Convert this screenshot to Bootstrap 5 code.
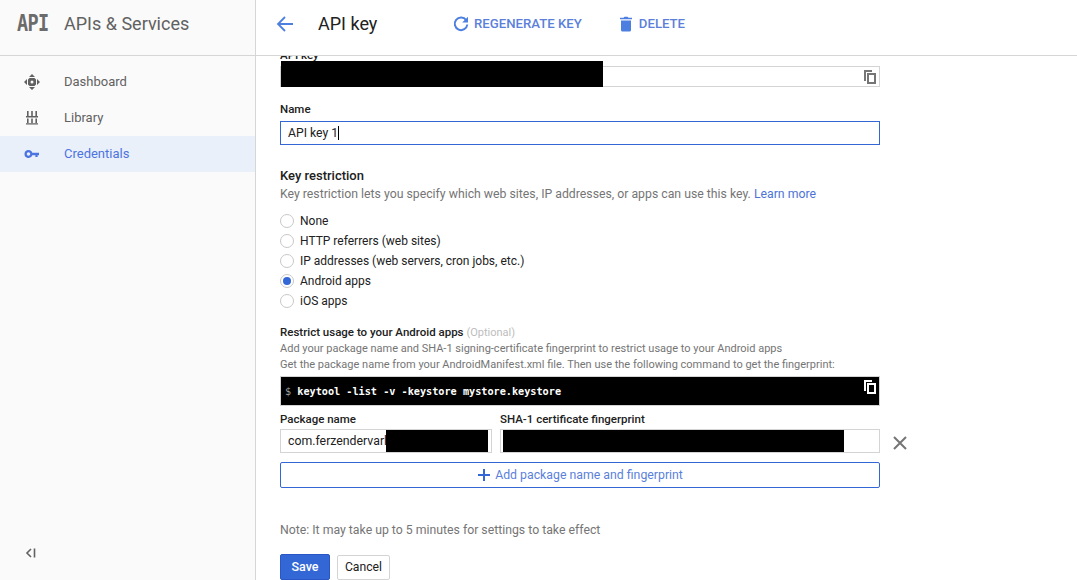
<!DOCTYPE html>
<html lang="en">
<head>
<meta charset="utf-8">
<title>API key</title>
<link href="https://cdn.jsdelivr.net/npm/bootstrap@5.3.0/dist/css/bootstrap.min.css" rel="stylesheet">
<style>
html,body{height:580px;overflow:hidden}
body{font-family:Roboto,"Liberation Sans",sans-serif;font-size:13px;color:#212121;background:#fff;line-height:20px}
.shell{height:580px}
.side{width:256px;flex:none;background:#fafafa;border-right:1px solid #d6d6d6}
.side-head{height:56px;border-bottom:1px solid #d6d6d6;padding:0 0 8px 17px;gap:16px}
.api-logo{font-family:"DejaVu Sans Mono","Liberation Mono",monospace;font-weight:700;font-size:18.5px;color:#6b6b6b;width:31px;letter-spacing:-.7px;line-height:1;display:inline-block;transform:scaleY(1.2) translateY(1px)}
.side-title{font-size:18px;color:#616161}
.side-nav{padding-top:8px}
.side-item{height:36px;color:#616161;padding-left:24px;gap:24px;text-decoration:none}
.side-item svg{width:16px;height:16px;flex:none}
.side-item.on{background:#eaf0fa;color:#4c74e0}
.collapse-ico{color:#616161;padding:0 0 18px 25px}
.main-col{min-width:0}
.top{height:56px;border-bottom:1px solid #d6d6d6;padding:0 0 8px 19px}
.page-title{font-size:18px;color:#212121;margin-left:23px;width:134px}
.top-act{font-size:13.2px;font-weight:500;color:#5b7fdb}
.act-del{margin-left:27px;gap:4px}
.form-area{flex:1;overflow:hidden;padding-left:24px}
.form-area>*{width:600px}
.lbl{font-weight:500;font-size:11.5px;line-height:16px;display:block;color:#212121}
.fld{position:relative;height:21px;border:1px solid #d4d4d4;background:#fff}
.redact{position:absolute;background:#000}
.copy-ico{position:absolute;right:3px;top:3px;width:12px;height:14px}
.name-fld{height:24px;border:1px solid #3367d6;padding:0 7px;font-size:12.2px;line-height:22px;margin-top:4px}
.caret-bar{display:inline-block;width:1px;height:14px;background:#000;vertical-align:-3px}
.sec-title{font-weight:500;font-size:13px;line-height:16px;margin-top:23px}
.hint{color:#757575;font-size:12.27px;line-height:18px;margin-top:1px}
.hint a{color:#4c74d6;text-decoration:none}
.radios{margin-top:8px}
.radio-row{height:20px;gap:6px;font-size:12px;color:#212121}
.rad{width:14px;height:14px;border:1px solid #c8c8c8;border-radius:50%;background:#fff;flex:none;display:flex;align-items:center;justify-content:center}
.rad.on::after{content:"";width:8px;height:8px;border-radius:50%;background:#3367d6}
.sub{font-size:11px;line-height:16px;color:#757575}
.sub-title{font-size:11.5px;font-weight:500;color:#212121;line-height:16px;margin-top:13px}
.opt{font-weight:400;color:#bdbdbd;font-size:11px}
.cmd{position:relative;background:#000;height:30px;margin-top:3px;border:1px solid #d4d4d4;color:#fff;font-family:"DejaVu Sans Mono","Liberation Mono",monospace;font-size:10.2px;font-weight:700;padding-left:4px;line-height:29px}
.cmd .dollar{color:#9e9e9e;font-weight:400}
.pair{gap:8px;margin-top:5px}
.pkg{width:212px;flex:none}
.sha{flex:1;min-width:0}
.pair .fld{height:24px;margin-top:2px;padding:0 7px;font-size:12.3px;line-height:22px;overflow:hidden}
.del-x{flex:none;width:24px;height:24px;margin:20px -32px -10px 0}
.add-btn{height:26px;margin-top:9px;border:1px solid #3367d6;border-radius:2px;color:#5b7fdb;font-size:12.3px;gap:4px;background:#fff}
.note{color:#757575;font-size:12.27px;margin-top:32px;line-height:20px}
.actions{gap:7px;margin-top:14px}
.btn-go{background:#3367d6;border:1px solid #2a56c6;color:#fff;font-size:12.5px;font-weight:500;width:50px;height:26px;border-radius:2px;padding:0;line-height:24px}
.btn-no{background:#fff;border:1px solid #d4d4d4;color:#212121;font-size:12.2px;width:53px;height:25px;border-radius:2px;padding:0;line-height:23px}
.clipped{margin-top:-9px;height:16px}
.fld-first{margin-top:3px}
.name-lbl{margin-top:14px}
</style>
</head>
<body>
<div class="shell d-flex">
  <aside class="side d-flex flex-column">
    <div class="side-head d-flex align-items-center">
      <span class="api-logo">API</span>
      <span class="side-title">APIs &amp; Services</span>
    </div>
    <nav class="side-nav flex-grow-1">
      <a class="side-item d-flex align-items-center" href="#">
        <svg viewBox="0 0 16 16" fill="#616161"><path d="M8 0l3 3H5zM8 16l-3-3h6zM0 8l3-3v6zM16 8l-3 3V5z"/><path fill-rule="evenodd" d="M5.500 4h5l1.500 1.500v5L10.500 12h-5L4 10.500v-5zM8 6.500a1.500 1.500 0 1 0 0 3 1.500 1.500 0 0 0 0-3z"/></svg>
        <span>Dashboard</span>
      </a>
      <a class="side-item d-flex align-items-center" href="#">
        <svg viewBox="0 0 16 16" fill="#616161"><path d="M3 1h1.600v5H3zM7.200 1h1.600v5H7.200zM11.400 1H13v5h-1.600zM2 6h12v1.400H2zM3 8.500h1.600v4.500H3zM7.200 8.500h1.600v4.500H7.200zM11.400 8.500H13v4.500h-1.600zM2 13.200h12v1.400H2z"/></svg>
        <span>Library</span>
      </a>
      <a class="side-item on d-flex align-items-center" href="#">
        <svg viewBox="0 0 16 16" fill="#4c74e0"><path fill-rule="evenodd" d="M4.500 4a4 4 0 0 1 3.800 2.800H15v2.400h-1.400V11h-2.200V9.200H8.300A4 4 0 1 1 4.500 4zm0 2.200a1.800 1.800 0 1 0 0 3.600 1.800 1.800 0 0 0 0-3.600z"/></svg>
        <span>Credentials</span>
      </a>
    </nav>
    <div class="collapse-ico">
      <svg width="12" height="12" viewBox="0 0 12 12" fill="none" stroke="#616161" stroke-width="1.600"><path d="M6 2L2 6l4 4"/><path d="M9.500 1.500v9"/></svg>
    </div>
  </aside>
  <div class="main-col flex-grow-1 d-flex flex-column">
    <header class="top d-flex align-items-center">
      <svg width="20" height="20" viewBox="0 0 20 20" fill="none" stroke="#4c7fe0" stroke-width="1.800"><path d="M18 10H3M10 3l-7 7 7 7"/></svg>
      <span class="page-title">API key</span>
      <span class="top-act d-flex align-items-center gap-1">
        <svg width="18" height="18" viewBox="0 0 18 18" fill="none" stroke="#4c7fe0" stroke-width="2"><path d="M14.200 5.200A6.300 6.300 0 1 0 15.300 9.500"/><path fill="#4c7fe0" stroke="none" d="M16 1.800V7.600h-5.800z"/></svg>
        REGENERATE KEY
      </span>
      <span class="top-act act-del d-flex align-items-center">
        <svg width="18" height="18" viewBox="0 0 18 18" fill="#4c7fe0" class="ms-2"><path d="M4 5.500h10V15a1.500 1.500 0 0 1-1.500 1.500h-7A1.500 1.500 0 0 1 4 15zM3 2.800h3.500l1-1h3l1 1H15v1.500H3z"/></svg>
        DELETE
      </span>
    </header>
    <main class="form-area">
      <label class="lbl clipped">API key</label>
      <div class="fld fld-first">
        <span class="redact" style="left:0;top:-6px;width:322px;height:26px"></span>
        <svg class="copy-ico" viewBox="0 0 12 14" fill="#757575"><path d="M0 0h8v2H2v9H0z"/><path fill-rule="evenodd" d="M3 3h9v11H3zm2 2v7h5V5z"/></svg>
      </div>
      <label class="lbl name-lbl">Name</label>
      <div class="name-fld">API key 1<span class="caret-bar"></span></div>
      <div class="sec-title">Key restriction</div>
      <div class="hint">Key restriction lets you specify which web sites, IP addresses, or apps can use this key. <a href="#">Learn more</a></div>
      <div class="radios">
        <div class="radio-row d-flex align-items-center"><span class="rad"></span>None</div>
        <div class="radio-row d-flex align-items-center"><span class="rad"></span>HTTP referrers (web sites)</div>
        <div class="radio-row d-flex align-items-center"><span class="rad"></span>IP addresses (web servers, cron jobs, etc.)</div>
        <div class="radio-row d-flex align-items-center"><span class="rad on"></span>Android apps</div>
        <div class="radio-row d-flex align-items-center"><span class="rad"></span>iOS apps</div>
      </div>
      <div class="sub-title">Restrict usage to your Android apps <span class="opt">(Optional)</span></div>
      <div class="sub">Add your package name and SHA-1 signing-certificate fingerprint to restrict usage to your Android apps</div>
      <div class="sub">Get the package name from your AndroidManifest.xml file. Then use the following command to get the fingerprint:</div>
      <div class="cmd"><span class="dollar">$</span> keytool -list -v -keystore mystore.keystore
        <svg class="copy-ico" viewBox="0 0 12 14" fill="#fff"><path d="M0 0h8v2H2v9H0z"/><path fill-rule="evenodd" d="M3 3h9v11H3zm2 2v7h5V5z"/></svg>
      </div>
      <div class="d-flex pair">
        <div class="pkg">
          <label class="lbl">Package name</label>
          <div class="fld">com.ferzendervarli<span class="redact" style="left:105px;top:0;width:102px;height:22px"></span></div>
        </div>
        <div class="sha">
          <label class="lbl">SHA-1 certificate fingerprint</label>
          <div class="fld"><span class="redact" style="left:2px;top:0;width:341px;height:22px"></span></div>
        </div>
        <svg class="del-x" viewBox="0 0 24 24" fill="none" stroke="#757575" stroke-width="2"><path d="M6 6l12 12M18 6L6 18"/></svg>
      </div>
      <div class="add-btn d-flex align-items-center justify-content-center">
        <svg width="14" height="14" viewBox="0 0 14 14" fill="#3367d6"><path d="M6 1h2v5h5v2H8v5H6V8H1V6h5z"/></svg>
        Add package name and fingerprint
      </div>
      <div class="note">Note: It may take up to 5 minutes for settings to take effect</div>
      <div class="actions d-flex align-items-center">
        <button class="btn btn-go" type="button">Save</button>
        <button class="btn btn-no" type="button">Cancel</button>
      </div>
    </main>
  </div>
</div>
<script src="https://cdn.jsdelivr.net/npm/bootstrap@5.3.0/dist/js/bootstrap.bundle.min.js"></script>
</body>
</html>
